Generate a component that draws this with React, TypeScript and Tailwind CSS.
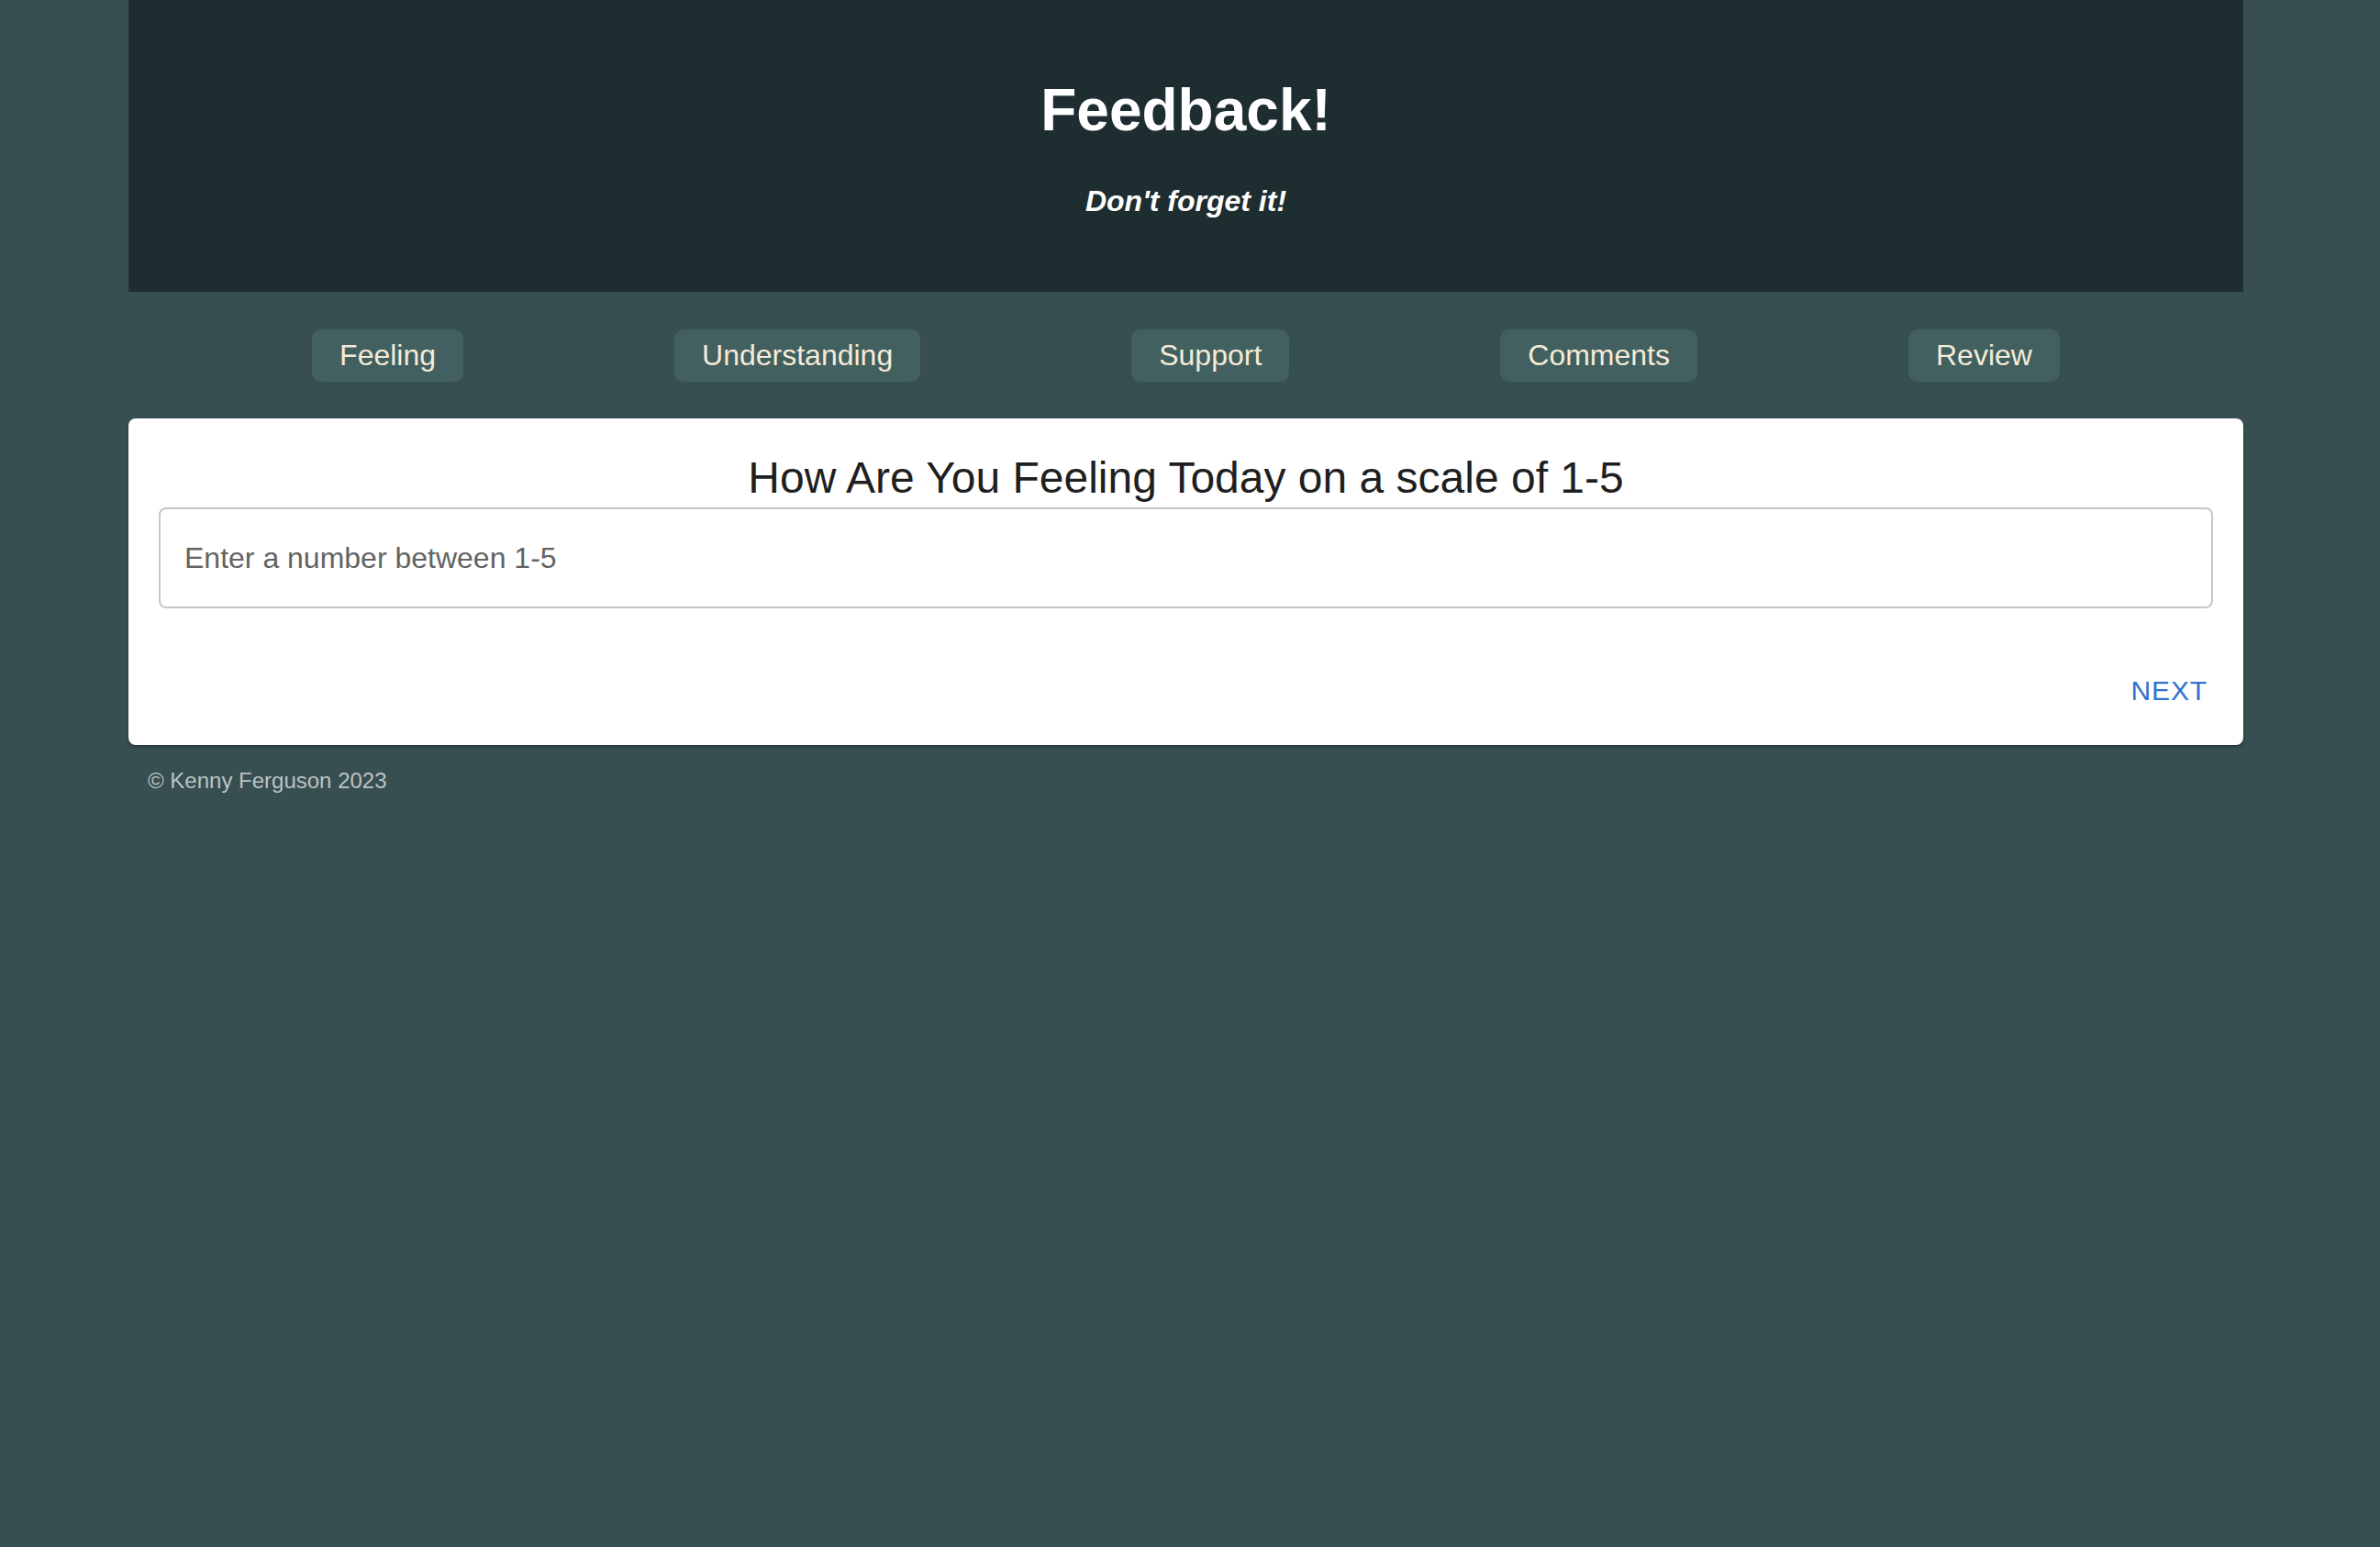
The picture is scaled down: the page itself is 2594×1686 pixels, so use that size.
import React from "react";

const steps = ["Feeling", "Understanding", "Support", "Comments", "Review"];

export default function App() {
  return (
    <div className="min-h-screen bg-[#374f50] font-['Liberation_Sans',Arial,sans-serif]">
      <div className="ml-[140px] w-[2305px]">
        <header className="flex h-[318px] flex-col items-center bg-[#1e2d2f] pt-[83px] text-white">
          <h1 className="text-[64px] leading-[74px] font-bold">Feedback!</h1>
          <h4 className="mt-[44px] text-[32px] leading-[37px] font-bold italic">
            Don't forget it!
          </h4>
        </header>

        <nav className="flex justify-center gap-[230px] pt-[41px]">
          {steps.map((s) => (
            <button
              key={s}
              className="rounded-[10px] bg-[#42605f] px-[30px] py-[10px] text-[32px] leading-[37px] text-[#f5ebd8]"
            >
              {s}
            </button>
          ))}
        </nav>

        <main className="mt-[40px] rounded-[8px] bg-white px-[33px] pt-[37px] pb-[41px] shadow-[0_2px_3px_rgba(0,0,0,0.35)]">
          <h2 className="text-center text-[48px] leading-[55px] text-[#1f1f1f]">
            How Are You Feeling Today on a scale of 1-5
          </h2>
          <input
            type="number"
            placeholder="Enter a number between 1-5"
            className="mt-[5px] block h-[110px] w-full rounded-[8px] border-2 border-[#c6c6c6] px-[26px] text-[32px] text-[#1f1f1f] outline-none placeholder:text-[#636363]"
          />
          <div className="mt-[72px] flex justify-end pr-[6px]">
            <button className="text-[30px] leading-[36px] tracking-[0.86px] text-[#2f72d0]">
              NEXT
            </button>
          </div>
        </main>

        <footer className="mt-[25px] pl-[21px] text-[24px] leading-[28px] text-[#bcc3c3]">
          © Kenny Ferguson 2023
        </footer>
      </div>
    </div>
  );
}
